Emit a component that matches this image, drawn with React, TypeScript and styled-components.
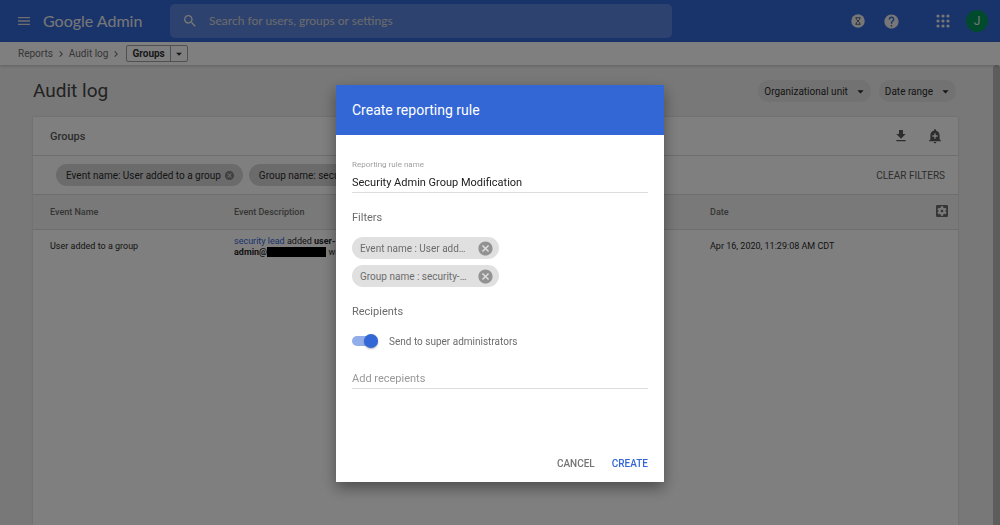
import React, { useState } from "react";
import styled, { createGlobalStyle } from "styled-components";
import {
  MdMenu,
  MdSearch,
  MdHelp,
  MdAddAlert,
  MdSettingsApplications,
  MdCancel,
  MdArrowDropDown,
  MdChevronRight,
} from "react-icons/md";

const GlobalStyle = createGlobalStyle`
  * { box-sizing: border-box; }
  body {
    margin: 0;
    font-family: Roboto, "Liberation Sans", sans-serif;
    font-size: 10px;
    color: #2a2a2a;
    background: #f0f0f0;
  }
  button, input { font: inherit; color: inherit; }
  button { border: 0; padding: 0; background: none; cursor: pointer; }
  svg { display: block; flex: none; }
`;

const Page = styled.div`
  display: flex;
  flex-direction: column;
  min-height: 100vh;
`;

const TopBar = styled.header`
  display: flex;
  align-items: center;
  height: 42px;
  padding: 0 12px 0 16px;
  background: #3367d6;
  color: #fff;
`;

const Brand = styled.div`
  width: 127px;
  margin-left: 11px;
  padding-bottom: 2px;
  font-family: Lato, Roboto, sans-serif;
  font-size: 16px;
  white-space: nowrap;
  color: #eee;
`;

const SearchBox = styled.label`
  display: flex;
  align-items: center;
  flex: 0 1 502px;
  height: 34px;
  padding-left: 12px;
  gap: 11px;
  border-radius: 5px;
  background: #5c85de;
  color: #eee;
`;

const SearchInput = styled.input`
  flex: 1;
  min-width: 0;
  border: 0;
  outline: 0;
  padding: 0 0 2px;
  background: none;
  font-family: Lato, Roboto, sans-serif;
  font-size: 12px;
  &::placeholder { color: #d8d8d8; opacity: 1; }
`;

const TopActions = styled.div`
  display: flex;
  align-items: center;
  gap: 18px;
  margin-left: auto;
  color: #eee;
`;

const AppsButton = styled.button`
  margin: 0 -4px 0 16px;
`;

const Avatar = styled.button`
  width: 22px;
  height: 22px;
  border-radius: 50%;
  background: #00965a;
  font-size: 12px;
`;

const Breadcrumbs = styled.nav`
  position: relative;
  display: flex;
  align-items: center;
  height: 23px;
  padding-left: 18px;
  gap: 2px;
  background: #fff;
  color: #6c6c6c;
  box-shadow: 0 1px 3px rgba(0, 0, 0, 0.2);
`;

const Crumb = styled.a`
  color: inherit;
  text-decoration: none;
`;

const CrumbMenu = styled.div`
  display: flex;
  height: 17px;
  margin-left: 2px;
  border: 1px solid #a0a0a0;
  border-radius: 2px;
  color: #333;
`;

const CrumbCurrent = styled.button`
  padding: 0 5px;
  font-weight: 700;
`;

const CrumbArrow = styled.button`
  width: 17px;
  display: grid;
  place-items: center;
  border-left: 1px solid #a0a0a0;
`;

const Body = styled.div`
  display: flex;
  flex: 1;
`;

const Main = styled.main`
  display: flex;
  flex-direction: column;
  flex: 1;
  min-width: 0;
  padding: 0 35px 0 33px;
`;

const ScrollTrack = styled.div`
  width: 7px;
  border-radius: 4px 4px 0 0;
  background: #bababa;
`;

const TitleRow = styled.div`
  display: flex;
  align-items: center;
  height: 52px;
  padding-right: 2px;
  gap: 8px;
`;

const PageTitle = styled.h1`
  margin: 0 auto 0 0;
  padding-bottom: 2px;
  font-size: 19px;
  font-weight: 400;
  color: #444;
`;

const DropButton = styled.button`
  display: flex;
  align-items: center;
  height: 22px;
  padding: 0 3px 0 6px;
  gap: 5px;
  border-radius: 11px;
  background: #e4e4e4;
`;

const Card = styled.section`
  flex: 1;
  background: #fff;
  box-shadow: 0 0 2px rgba(0, 0, 0, 0.15);
`;

const CardHead = styled.div`
  display: flex;
  align-items: center;
  height: 39px;
  padding: 0 15px 0 17px;
  gap: 18px;
  border-bottom: 1px solid #dcdcdc;
  color: #5a5a5a;
`;

const CardTitle = styled.h2`
  margin: 0 auto 0 0;
  font-size: 11px;
  font-weight: 500;
`;

const FilterRow = styled.div`
  display: flex;
  align-items: center;
  height: 38px;
  padding: 0 13px 0 23px;
  gap: 6px;
`;

const FilterChip = styled.div`
  display: flex;
  align-items: center;
  height: 22px;
  padding: 0 8px 0 10px;
  gap: 3px;
  border-radius: 11px;
  background: #d6d6d6;
`;

const ChipRemove = styled.button`
  color: #858585;
`;

const ClearButton = styled.button`
  margin-left: auto;
  color: #5a5a5a;
`;

const Table = styled.table`
  width: 100%;
  table-layout: fixed;
  border-collapse: collapse;
  font-size: 9px;
  text-align: left;
`;

const HeadCell = styled.th<{ $width?: number }>`
  width: ${(p) => (p.$width ? `${p.$width}px` : "auto")};
  height: 35px;
  padding: 0 17px;
  border-top: 1px solid #dcdcdc;
  border-bottom: 1px solid #dcdcdc;
  background: #f2f2f2;
  color: #6c6c6c;
  font-weight: 500;
`;

const IconHeadCell = styled(HeadCell)`
  padding: 0 8px 0 33px;
`;

const Cell = styled.td`
  height: 34px;
  padding: 0 17px;
  line-height: 11px;
`;

const Description = styled.div`
  width: 112px;
`;

const UserLink = styled.a`
  color: #3367d6;
  text-decoration: none;
`;

const Redacted = styled.span`
  display: inline-block;
  width: 59px;
  height: 10px;
  background: #000;
  vertical-align: top;
`;

const Scrim = styled.div`
  position: fixed;
  inset: 0;
  display: flex;
  align-items: center;
  justify-content: center;
  padding-top: 42px;
  background: rgba(0, 0, 0, 0.5);
`;

const Dialog = styled.form`
  display: flex;
  flex-direction: column;
  width: 328px;
  background: #fff;
  color: #6c6c6c;
  box-shadow: 0 6px 14px rgba(0, 0, 0, 0.4);
`;

const DialogHead = styled.h2`
  display: flex;
  align-items: center;
  height: 50px;
  margin: 0;
  padding: 0 16px;
  background: #3367d6;
  color: #fff;
  font-size: 14px;
  font-weight: 400;
`;

const DialogBody = styled.div`
  padding: 24px 16px 0;
`;

const FieldLabel = styled.label`
  display: block;
  font-size: 8px;
  line-height: 12px;
  color: #9e9e9e;
`;

const TextField = styled.input`
  display: block;
  width: 100%;
  height: 22px;
  padding: 2px 0 0;
  border: 0;
  border-bottom: 1px solid #dcdcdc;
  border-radius: 0;
  outline: 0;
  background: none;
  color: #212121;
  font-size: 11px;
  &::placeholder { color: #999; opacity: 1; }
`;

const SectionTitle = styled.h3`
  margin: 18px 0 12px;
  font-size: 11px;
  line-height: 14px;
  font-weight: 400;
`;

const ChipList = styled.div`
  display: flex;
  flex-direction: column;
  gap: 6px;
`;

const RuleChip = styled.div`
  display: flex;
  align-items: center;
  justify-content: space-between;
  width: 147px;
  height: 22px;
  padding: 0 5px 0 8px;
  border-radius: 11px;
  background: #e0e0e0;
`;

const RuleRemove = styled.button`
  color: #929292;
`;

const SwitchRow = styled.label`
  display: flex;
  align-items: center;
  height: 20px;
  margin-bottom: 16px;
  gap: 11px;
`;

const Switch = styled.input`
  appearance: none;
  display: flex;
  align-items: center;
  width: 26px;
  height: 10px;
  margin: 0;
  border-radius: 5px;
  background: ${(p) => (p.checked ? "#92aeea" : "#bdbdbd")};
  &::before {
    content: "";
    width: 14px;
    height: 14px;
    flex: none;
    margin-left: ${(p) => (p.checked ? "12px" : "0")};
    border-radius: 50%;
    background: ${(p) => (p.checked ? "#3367d6" : "#fafafa")};
    box-shadow: 0 1px 2px rgba(0, 0, 0, 0.3);
  }
`;

const DialogActions = styled.div`
  display: flex;
  justify-content: flex-end;
  gap: 17px;
  padding: 68px 16px 11px;
`;

const ActionButton = styled.button<{ $primary?: boolean }>`
  height: 14px;
  line-height: 14px;
  font-weight: 500;
  color: ${(p) => (p.$primary ? "#3367d6" : "#757575")};
`;

const HourglassIcon = () => (
  <svg width="14" height="14" viewBox="0 0 28 28" fill="none">
    <circle cx="14" cy="14" r="13.5" fill="currentColor" />
    <path
      d="M9 7.5h10M9 20.5h10M10.5 7.5v3l3.5 3.5-3.5 3.5v3M17.5 7.5v3l-3.5 3.5 3.5 3.5v3"
      stroke="#55657f"
      strokeWidth="2"
    />
  </svg>
);

const AppsIcon = () => (
  <svg width="18" height="18" viewBox="0 0 18 18" fill="currentColor">
    {[4, 9, 14].flatMap((y) =>
      [4, 9, 14].map((x) => <circle key={`${x}-${y}`} cx={x} cy={y} r="1.6" />)
    )}
  </svg>
);

const DownloadIcon = () => (
  <svg width="16" height="16" viewBox="0 0 24 24" fill="currentColor">
    <path d="M19 9h-4V3H9v6H5l7 7 7-7zM5 18v2h14v-2H5z" />
  </svg>
);

const ruleFilters = ["Event name : User add…", "Group name : security-…"];

export default function App() {
  const [ruleName, setRuleName] = useState("Security Admin Group Modification");
  const [superAdmins, setSuperAdmins] = useState(true);

  return (
    <>
      <GlobalStyle />
      <Page>
        <TopBar>
          <button aria-label="Menu"><MdMenu size={16} color="#ddd" /></button>
          <Brand>Google Admin</Brand>
          <SearchBox>
            <MdSearch size={16} />
            <SearchInput
              type="search"
              aria-label="Search"
              placeholder="Search for users, groups or settings"
            />
          </SearchBox>
          <TopActions>
            <button aria-label="Tasks"><HourglassIcon /></button>
            <button aria-label="Help"><MdHelp size={17} /></button>
            <AppsButton aria-label="Apps"><AppsIcon /></AppsButton>
            <Avatar aria-label="Account">J</Avatar>
          </TopActions>
        </TopBar>

        <Breadcrumbs aria-label="Breadcrumb">
          <Crumb href="#reports">Reports</Crumb>
          <MdChevronRight size={12} />
          <Crumb href="#audit">Audit log</Crumb>
          <MdChevronRight size={12} />
          <CrumbMenu>
            <CrumbCurrent>Groups</CrumbCurrent>
            <CrumbArrow aria-label="Choose log"><MdArrowDropDown size={14} /></CrumbArrow>
          </CrumbMenu>
        </Breadcrumbs>

        <Body>
          <Main>
            <TitleRow>
              <PageTitle>Audit log</PageTitle>
              <DropButton>Organizational unit <MdArrowDropDown size={15} /></DropButton>
              <DropButton>Date range <MdArrowDropDown size={15} /></DropButton>
            </TitleRow>

            <Card>
              <CardHead>
                <CardTitle>Groups</CardTitle>
                <button aria-label="Download"><DownloadIcon /></button>
                <button aria-label="Create reporting rule"><MdAddAlert size={16} /></button>
              </CardHead>
              <FilterRow>
                <FilterChip>
                  Event name: User added to a group
                  <ChipRemove aria-label="Remove event filter"><MdCancel size={11} /></ChipRemove>
                </FilterChip>
                <FilterChip>
                  Group name: security-admin
                  <ChipRemove aria-label="Remove group filter"><MdCancel size={11} /></ChipRemove>
                </FilterChip>
                <ClearButton>CLEAR FILTERS</ClearButton>
              </FilterRow>
              <Table>
                <thead>
                  <tr>
                    <HeadCell $width={184}>Event Name</HeadCell>
                    <HeadCell>Event Description</HeadCell>
                    <HeadCell $width={208}>Date</HeadCell>
                    <IconHeadCell $width={57}>
                      <button aria-label="Manage columns"><MdSettingsApplications size={16} /></button>
                    </IconHeadCell>
                  </tr>
                </thead>
                <tbody>
                  <tr>
                    <Cell>User added to a group</Cell>
                    <Cell>
                      <Description>
                        <UserLink href="#user">security lead</UserLink> added{" "}
                        <b>user-admin@</b><Redacted /> was
                      </Description>
                    </Cell>
                    <Cell>Apr 16, 2020, 11:29:08 AM CDT</Cell>
                    <Cell />
                  </tr>
                </tbody>
              </Table>
            </Card>
          </Main>
          <ScrollTrack />
        </Body>
      </Page>

      <Scrim>
        <Dialog
          role="dialog"
          aria-labelledby="dialog-title"
          onSubmit={(e) => e.preventDefault()}
        >
          <DialogHead id="dialog-title">Create reporting rule</DialogHead>
          <DialogBody>
            <FieldLabel htmlFor="rule-name">Reporting rule name</FieldLabel>
            <TextField
              id="rule-name"
              value={ruleName}
              onChange={(e) => setRuleName(e.target.value)}
            />
            <SectionTitle>Filters</SectionTitle>
            <ChipList>
              {ruleFilters.map((text) => (
                <RuleChip key={text}>
                  {text}
                  <RuleRemove type="button" aria-label="Remove filter"><MdCancel size={17} /></RuleRemove>
                </RuleChip>
              ))}
            </ChipList>
            <SectionTitle>Recipients</SectionTitle>
            <SwitchRow>
              <Switch
                type="checkbox"
                role="switch"
                checked={superAdmins}
                onChange={(e) => setSuperAdmins(e.target.checked)}
              />
              Send to super administrators
            </SwitchRow>
            <TextField aria-label="Add recipients" placeholder="Add recepients" />
          </DialogBody>
          <DialogActions>
            <ActionButton type="button">CANCEL</ActionButton>
            <ActionButton type="submit" $primary>CREATE</ActionButton>
          </DialogActions>
        </Dialog>
      </Scrim>
    </>
  );
}
